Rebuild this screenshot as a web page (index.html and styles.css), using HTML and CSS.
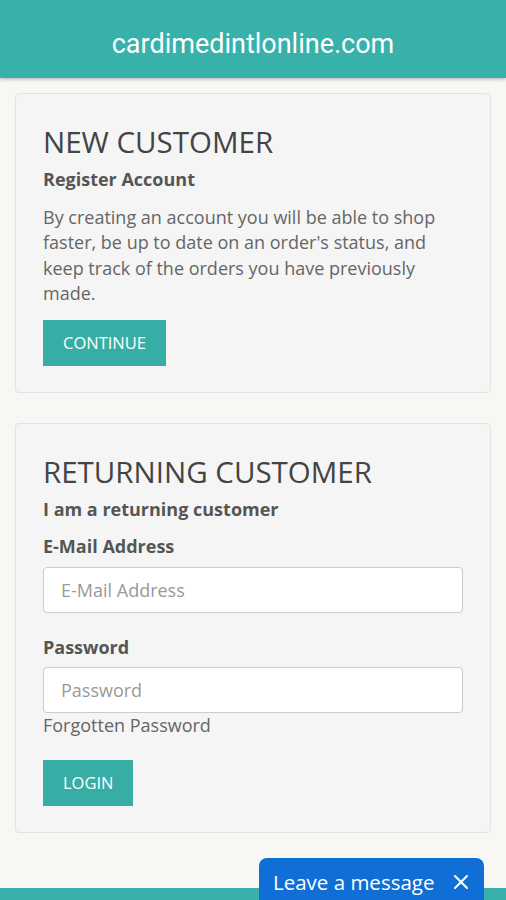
FILE: index.html
```html
<!DOCTYPE html>
<html>

<head>
  <meta charset="utf-8">
  <meta name="viewport" content="width=device-width">
  <title>Account Login</title>
  <link rel="stylesheet" href="styles.css">
</head>

<body>
  <header class="topbar">cardimedintlonline.com</header>

  <main class="content">
    <section class="well">
      <h2 class="well-title">NEW CUSTOMER</h2>
      <p class="well-sub">Register Account</p>
      <p class="well-text">By creating an account you will be able to shop faster, be up to date on an order's status, and keep track of the orders you have previously made.</p>
      <a class="btn" href="#">CONTINUE</a>
    </section>

    <section class="well">
      <h2 class="well-title">RETURNING CUSTOMER</h2>
      <p class="well-sub">I am a returning customer</p>
      <form class="login">
        <label class="field-label" for="email">E-Mail Address</label>
        <input class="field" id="email" type="text" placeholder="E-Mail Address">
        <label class="field-label pw" for="password">Password</label>
        <input class="field" id="password" type="password" placeholder="Password">
        <a class="forgot" href="#">Forgotten Password</a>
        <a class="btn login-btn" href="#">LOGIN</a>
      </form>
    </section>
  </main>

  <footer class="footer"></footer>

  <div class="chat">
    <span>Leave a message</span>
    <svg class="chat-close" width="16" height="16" viewBox="0 0 16 16">
      <path d="M2 2 L14 14 M14 2 L2 14" stroke="#fff" stroke-width="2" stroke-linecap="round" fill="none"/>
    </svg>
  </div>
</body>
</html>
```

FILE: styles.css
```css
body {
  background-color: #f8f7f3;
  color: #666;
  font-family: "Open Sans", sans-serif;
  font-size: 18px;
  margin: 0;
}

.topbar {
  background-color: #37b1a9;
  box-shadow: 0 2px 3px rgba(0, 0, 0, 0.2);
  color: #fff;
  font-family: Roboto, sans-serif;
  font-size: 27px;
  height: 78px;
  line-height: 88px;
  text-align: center;
}

.content {
  padding: 15px 15px 55px;
}

.well {
  background-color: #f5f5f5;
  border: 1px solid #e3e3e3;
  border-radius: 4px;
  margin-bottom: 30px;
  padding: 31px 27px 26px;
}

.well:last-child {
  margin-bottom: 0;
}

.well-title {
  color: #444;
  font-size: 29.5px;
  font-weight: 400;
  line-height: 33px;
  margin: 0 0 9px;
}

.well-sub {
  color: #555;
  font-weight: 700;
  line-height: 25.5px;
  margin: 0;
}

.well-text {
  line-height: 25.5px;
  margin: 12px 0 13px;
}

.btn {
  background-color: #36aea6;
  color: #fff;
  display: inline-block;
  font-size: 16.5px;
  line-height: 46px;
  padding: 0 20px;
  text-decoration: none;
}

.login {
  display: flex;
  flex-direction: column;
  align-items: flex-start;
  margin-top: 12px;
}

.field-label {
  color: #555;
  font-weight: 700;
  line-height: 25.5px;
}

.field-label.pw {
  margin-top: 22px;
}

.field {
  background: #fff;
  border: 1px solid #ccc;
  border-radius: 4px;
  box-sizing: border-box;
  color: #555;
  font-family: "Open Sans", sans-serif;
  font-size: 18px;
  height: 46px;
  margin-top: 7px;
  padding: 0 17px;
  width: 100%;
}

.field::placeholder {
  color: #999;
}

.forgot {
  color: #666;
  line-height: 25.5px;
  text-decoration: none;
}

.login-btn {
  margin-top: 21px;
}

.footer {
  background-color: #37b1a9;
  height: 13px;
}

.chat {
  align-items: center;
  background-color: #0f6fd6;
  border-radius: 8px 8px 0 0;
  bottom: -6px;
  box-sizing: border-box;
  color: #fff;
  display: flex;
  font-size: 20.5px;
  gap: 19px;
  height: 48px;
  padding: 0 14px;
  position: fixed;
  right: 22px;
  width: 225px;
}
```
